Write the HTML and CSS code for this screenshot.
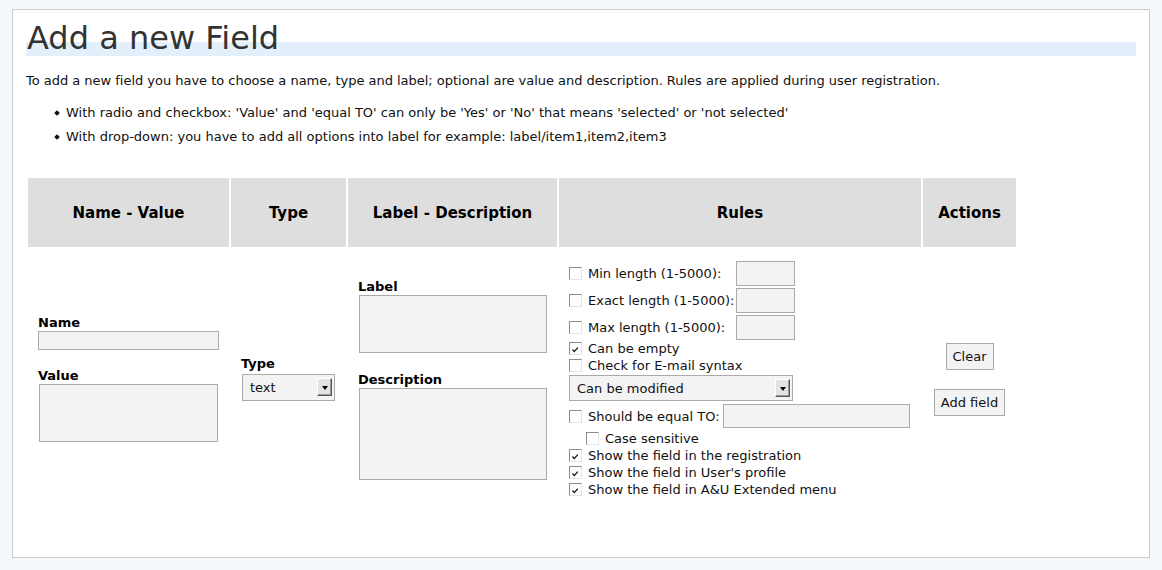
FILE: index.html
```html
<!DOCTYPE html>
<html lang="en">
<head>
<meta charset="utf-8">
<title>Add a new Field</title>
<link rel="stylesheet" href="styles.css">
</head>
<body>
<div class="panel">
  <h1 class="title">Add a new Field</h1>
  <p class="intro">To add a new field you have to choose a name, type and label; optional are value and description. Rules are applied during user registration.</p>
  <ul class="notes">
    <li>With radio and checkbox: 'Value' and 'equal TO' can only be 'Yes' or 'No' that means 'selected' or 'not selected'</li>
    <li>With drop-down: you have to add all options into label for example: label/item1,item2,item3</li>
  </ul>
  <table class="fields">
    <thead>
      <tr>
        <th class="col-name">Name - Value</th>
        <th class="col-type">Type</th>
        <th class="col-label">Label - Description</th>
        <th class="col-rules">Rules</th>
        <th class="col-actions">Actions</th>
      </tr>
    </thead>
    <tbody>
      <tr>
        <td class="cell cell-name">
          <label class="flabel">Name</label>
          <input class="inp name-inp" type="text">
          <label class="flabel">Value</label>
          <textarea class="inp value-ta"></textarea>
        </td>
        <td class="cell cell-type">
          <label class="flabel">Type</label>
          <span class="sel type-sel"><select><option>text</option></select><span class="sel-btn"><span class="tri"></span></span></span>
        </td>
        <td class="cell cell-label">
          <label class="flabel">Label</label>
          <textarea class="inp label-ta"></textarea>
          <label class="flabel">Description</label>
          <textarea class="inp desc-ta"></textarea>
        </td>
        <td class="cell cell-rules">
          <div class="len-grid">
            <label class="chk"><span class="cb"></span>Min length (1-5000):</label><input class="inp len" type="text">
            <label class="chk"><span class="cb"></span>Exact length (1-5000):</label><input class="inp len" type="text">
            <label class="chk"><span class="cb"></span>Max length (1-5000):</label><input class="inp len" type="text">
          </div>
          <label class="chk"><span class="cb"><svg viewBox="0 0 11 11" width="11" height="11"><path d="M2.5 6.5 L4.3 8.6 L7.8 4.6" fill="none" stroke="#111" stroke-width="1.3"/></svg></span>Can be empty</label>
          <label class="chk"><span class="cb"></span>Check for E-mail syntax</label>
          <span class="sel mod-sel"><select><option>Can be modified</option></select><span class="sel-btn"><span class="tri"></span></span></span>
          <div class="equal-row"><label class="chk"><span class="cb"></span>Should be equal TO:</label><input class="inp eq" type="text"></div>
          <label class="chk indent"><span class="cb"></span>Case sensitive</label>
          <label class="chk"><span class="cb"><svg viewBox="0 0 11 11" width="11" height="11"><path d="M2.5 6.5 L4.3 8.6 L7.8 4.6" fill="none" stroke="#111" stroke-width="1.3"/></svg></span>Show the field in the registration</label>
          <label class="chk"><span class="cb"><svg viewBox="0 0 11 11" width="11" height="11"><path d="M2.5 6.5 L4.3 8.6 L7.8 4.6" fill="none" stroke="#111" stroke-width="1.3"/></svg></span>Show the field in User's profile</label>
          <label class="chk"><span class="cb"><svg viewBox="0 0 11 11" width="11" height="11"><path d="M2.5 6.5 L4.3 8.6 L7.8 4.6" fill="none" stroke="#111" stroke-width="1.3"/></svg></span>Show the field in A&amp;U Extended menu</label>
        </td>
        <td class="cell cell-actions">
          <button class="btn" type="button">Clear</button>
          <button class="btn btn-add" type="button">Add field</button>
        </td>
      </tr>
    </tbody>
  </table>
</div>
</body>
</html>
```

FILE: styles.css
```css
html, body {
  margin: 0;
}
body {
  padding: 9px 12px;
  background: #f5f9fd;
  font-family: "DejaVu Sans", sans-serif;
  font-size: 13px;
  color: #111;
}
.panel {
  background: #fff;
  border: 1px solid #cccccc;
  padding: 8px 13px 45px;
}
.title {
  margin: 0;
  height: 37px;
  padding-top: 1px;
  padding-left: 1px;
  line-height: 38px;
  font-size: 32px;
  font-weight: normal;
  color: #333;
  background: linear-gradient(to bottom, transparent 24px, #e3f0fb 24px);
}
.intro {
  margin: 17px 0 0;
  line-height: 16px;
  letter-spacing: -0.02px;
}
.notes {
  margin: 16px 0 0;
  padding-left: 40px;
  list-style: none;
}
.notes li {
  line-height: 16px;
}
.notes li + li {
  margin-top: 8px;
}
.notes li::before {
  content: "";
  display: inline-block;
  width: 4px;
  height: 4px;
  background: #111;
  transform: rotate(45deg);
  margin-left: -11px;
  margin-right: 7px;
  vertical-align: 2px;
}
.fields {
  margin-top: 31px;
  border-collapse: separate;
  border-spacing: 2px;
  table-layout: fixed;
  width: 992px;
}
.fields th {
  height: 69px;
  padding: 0;
  background: #dedede;
  font-size: 15px;
  font-weight: bold;
  color: #000;
  text-align: center;
  vertical-align: middle;
}
.col-name { width: 201px; }
.col-type { width: 115px; }
.col-label { width: 209px; }
.col-rules { width: 362px; }
.col-actions { width: 93px; }
.cell {
  padding: 12px 10px;
  vertical-align: middle;
}
.flabel {
  display: block;
  font-weight: bold;
  line-height: 16px;
  color: #000;
}
.inp {
  display: block;
  box-sizing: border-box;
  margin: 0;
  padding: 0;
  border: 1px solid #aaaaaa;
  background: #f3f3f3;
  font-family: "DejaVu Sans", sans-serif;
  font-size: 13px;
  resize: none;
  outline: none;
}
.name-inp {
  width: 181px;
  height: 19px;
  margin-bottom: 18px;
}
.value-ta {
  width: 179px;
  height: 58px;
  margin-left: 1px;
  margin-bottom: 3px;
}
.cell-type .flabel {
  margin-bottom: 2px;
}
.sel {
  position: relative;
  display: block;
}
.sel select {
  display: block;
  box-sizing: border-box;
  width: 100%;
  height: 100%;
  margin: 0;
  padding: 0 0 0 7px;
  appearance: none;
  -webkit-appearance: none;
  border: 1px solid #aaaaaa;
  border-radius: 0;
  background: #f3f3f3;
  font-family: "DejaVu Sans", sans-serif;
  font-size: 13px;
  color: #111;
  outline: none;
}
.sel-btn {
  position: absolute;
  right: 3px;
  top: 50%;
  width: 15px;
  height: 18px;
  margin-top: -9px;
  box-sizing: border-box;
  border: 1px solid;
  border-color: #ffffff #555555 #555555 #ffffff;
  box-shadow: inset -1px -1px 0 #999999;
  background: #e2e2e2;
  display: flex;
  align-items: center;
  justify-content: center;
}
.tri {
  width: 0;
  height: 0;
  border-left: 3.5px solid transparent;
  border-right: 3.5px solid transparent;
  border-top: 4px solid #000;
  margin-top: 2px;
}
.type-sel {
  width: 93px;
  height: 27px;
  margin-left: 1px;
  margin-bottom: 3px;
}
.label-ta {
  width: 188px;
  height: 58px;
  margin-left: 1px;
  margin-bottom: 19px;
}
.desc-ta {
  width: 188px;
  height: 92px;
  margin-left: 1px;
}
.len-grid {
  display: grid;
  grid-template-columns: max-content 59px;
  grid-auto-rows: 25px;
  column-gap: 2px;
  row-gap: 2px;
  align-items: center;
}
.len {
  width: 59px;
  height: 25px;
}
.chk {
  display: flex;
  align-items: center;
  height: 17px;
  line-height: 17px;
  white-space: nowrap;
}
.cb {
  flex: none;
  box-sizing: border-box;
  width: 13px;
  height: 13px;
  margin-right: 6px;
  border: 1px solid;
  border-color: #8c8c8c #e4e4e4 #e4e4e4 #8c8c8c;
  background: #fff;
  display: flex;
  align-items: center;
  justify-content: center;
}
.cb svg {
  display: block;
}
.mod-sel {
  width: 224px;
  height: 26px;
  margin-top: 1px;
}
.equal-row {
  display: flex;
  align-items: center;
  margin-top: 3px;
  height: 24px;
}
.eq {
  width: 187px;
  height: 24px;
  margin-left: 3px;
}
.indent {
  margin-top: 2px;
  padding-left: 17px;
}
.cell-actions {
  padding: 12px 0;
  text-align: center;
}
.btn {
  display: block;
  margin: 0 auto;
  height: 27px;
  padding: 0 6px;
  border: 1px solid #aaaaaa;
  border-radius: 0;
  background: #f3f3f3;
  font-family: "DejaVu Sans", sans-serif;
  font-size: 13px;
  color: #111;
}
.btn-add {
  margin-top: 19px;
}
```
